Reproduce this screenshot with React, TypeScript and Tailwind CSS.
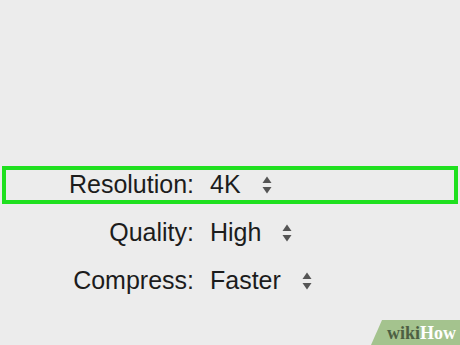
import React from 'react'

const ROWS = [
  { label: 'Resolution:', value: '4K', selected: true },
  { label: 'Quality:', value: 'High', selected: false },
  { label: 'Compress:', value: 'Faster', selected: false },
]

function Stepper() {
  return (
    <svg width="10" height="20" viewBox="0 0 10 20" className="ml-[21px]">
      <path d="M5 1.5 L9.5 8 L0.5 8 Z" fill="#555" />
      <path d="M5 18.5 L9.5 12 L0.5 12 Z" fill="#555" />
    </svg>
  )
}

export default function App() {
  return (
    <div
      className="relative w-[460px] h-[345px] overflow-hidden bg-[#ececec]"
      style={{ fontFamily: '"Helvetica Neue", "Liberation Sans", Arial, sans-serif' }}
    >
      <div className="pt-[166px] flex flex-col">
        {ROWS.map((r, i) => (
          <div
            key={r.label}
            className={`flex items-center h-[38px] mx-[2px] border-4 ${
              r.selected ? 'border-[#1fe01f]' : 'border-transparent'
            } ${i > 0 ? 'mt-[10px]' : ''}`}
          >
            <div className="w-[188px] text-right text-[25px] text-[#1c1c1c]">{r.label}</div>
            <div className="ml-[16px] text-[25px] text-[#1c1c1c]">{r.value}</div>
            <Stepper />
          </div>
        ))}
      </div>

      {/* wikiHow badge */}
      <div className="absolute right-0 bottom-0 w-[89px] h-[25px] bg-[#a4c38e] [clip-path:polygon(11px_0,100%_0,100%_100%,0_100%)] flex items-center justify-end pr-[4px]">
        <span
          className="text-[18px] font-bold leading-none"
          style={{ fontFamily: '"Liberation Serif", "DejaVu Serif", serif' }}
        >
          <span className="text-[#4d5f43]">wiki</span>
          <span className="text-white">How</span>
        </span>
      </div>
    </div>
  )
}
